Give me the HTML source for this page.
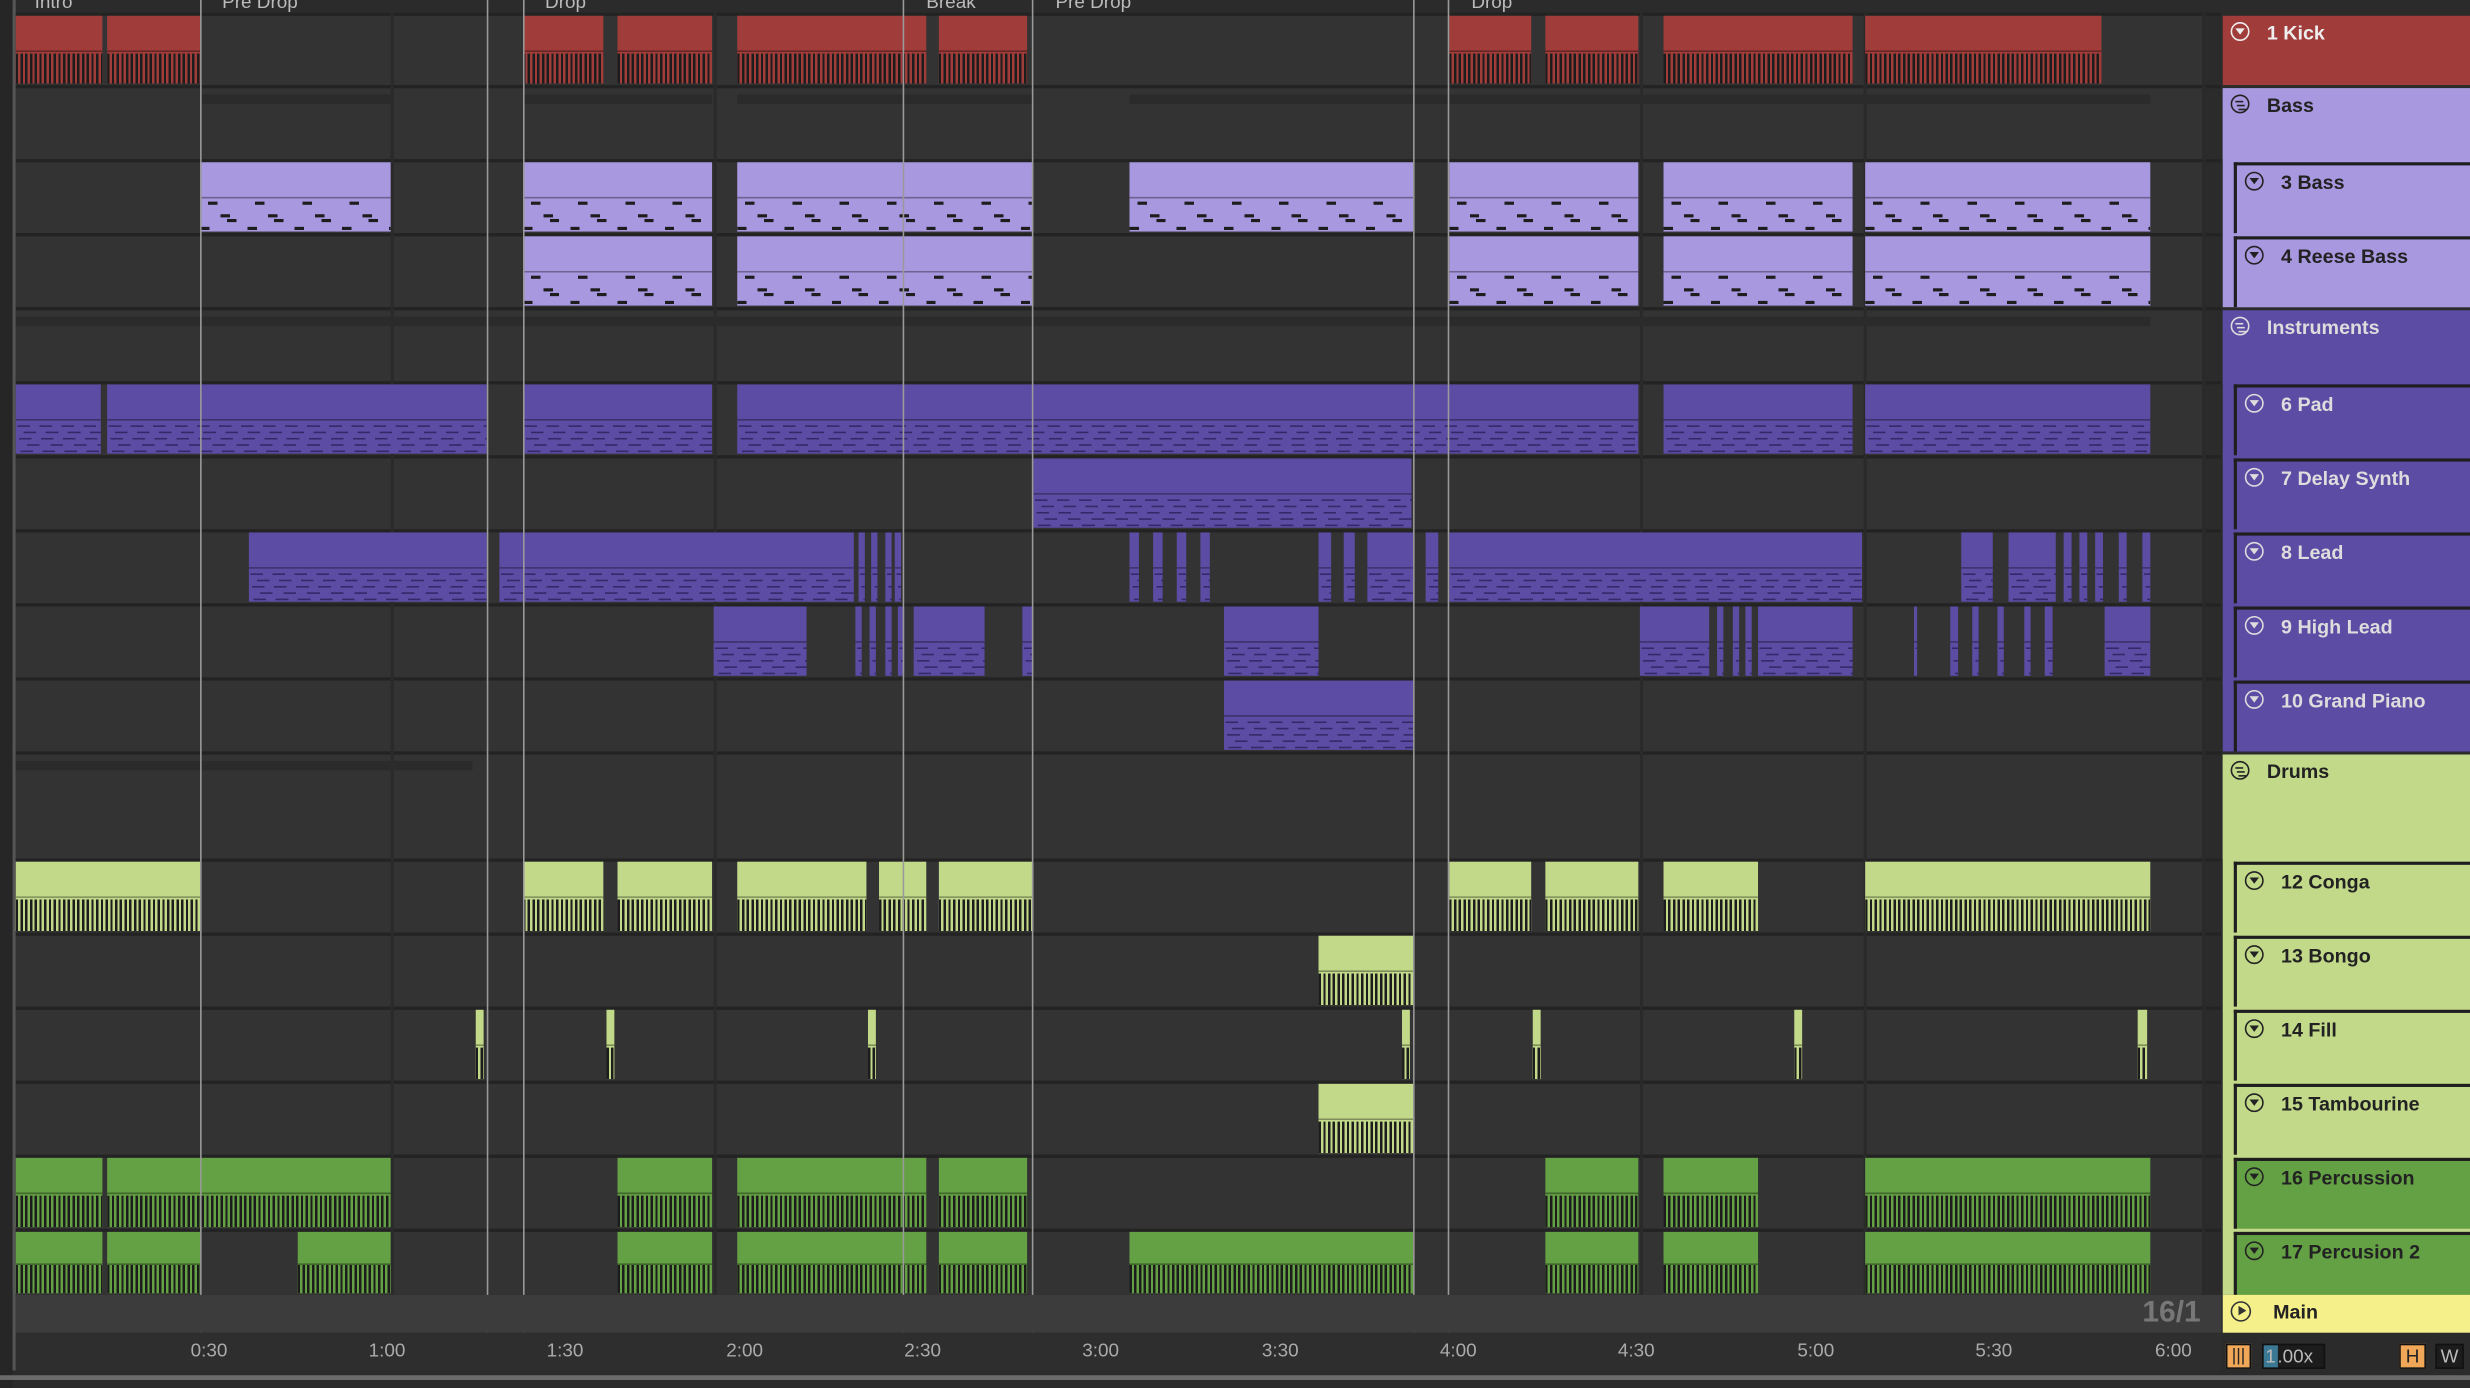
<!DOCTYPE html>
<html><head><meta charset="utf-8">
<style>
html,body{margin:0;padding:0;background:#2a2a2a;overflow:hidden;width:2470px;height:1388px}
#w{position:absolute;left:0;top:0;width:1568px;height:881px;transform:scale(1.5753);transform-origin:0 0;background:#2b2b2b;font-family:"Liberation Sans",sans-serif;overflow:hidden}
.row{position:absolute;left:10px;width:1388px;background:#333}
.sep{position:absolute;left:10px;width:1400px;height:2px;background:#232323}
.c{position:absolute;box-sizing:border-box;overflow:hidden}
.c .t{position:absolute;left:0;right:0;top:0;height:50%;border-bottom:1px solid rgba(0,0,0,.35)}
.c .b{position:absolute;left:0;right:0;bottom:0;height:45%}
.loc{position:absolute;top:0;width:1px;height:848px;background:#9a9a9a}
.hd{position:absolute;left:1411px;width:157px;box-sizing:border-box;font-weight:bold;font-size:12.5px;padding:4px 0 0 28px}
.hd.sub{left:1418px}
.ic{position:absolute;left:5px;top:4px;width:12px;height:12px;border:1.3px solid currentColor;border-radius:50%;box-sizing:border-box}
.ic:after{content:"";position:absolute;left:2px;top:3px;border-left:3px solid transparent;border-right:3px solid transparent;border-top:4px solid currentColor}
.ic.g:after{border:0;left:2px;top:2.5px;width:6px;height:1.2px;background:currentColor;box-shadow:1px 2.5px 0 currentColor,2px 5px 0 currentColor;width:5px}
.lbl{position:absolute;top:-6px;color:#bbb;font-size:12px}
.tm{position:absolute;top:850px;color:#aaa;font-size:12px}
</style></head><body><div id="w">
<div style="position:absolute;left:0;top:0;width:8px;height:881px;background:#262626"></div>
<div style="position:absolute;left:8px;top:0;width:2px;height:870px;background:#555"></div>
<div id="a"></div>
<div class="lbl" style="left:22px">Intro</div>
<div class="lbl" style="left:141px">Pre Drop</div>
<div class="lbl" style="left:346px">Drop</div>
<div class="lbl" style="left:588px">Break</div>
<div class="lbl" style="left:670px">Pre Drop</div>
<div class="lbl" style="left:934px">Drop</div>
<div style="position:absolute;left:10px;top:822px;width:1400px;height:24px;background:#3c3c3c"></div>
<div style="position:absolute;left:1360px;top:823px;color:#777;font-size:19px;font-weight:bold">16/1</div>
<div style="position:absolute;left:10px;top:846px;width:1400px;height:24px;background:#2e2e2e"></div>
<div class="tm" style="left:121px">0:30</div><div class="tm" style="left:234px">1:00</div><div class="tm" style="left:347px">1:30</div><div class="tm" style="left:461px">2:00</div><div class="tm" style="left:574px">2:30</div><div class="tm" style="left:687px">3:00</div><div class="tm" style="left:801px">3:30</div><div class="tm" style="left:914px">4:00</div><div class="tm" style="left:1027px">4:30</div><div class="tm" style="left:1141px">5:00</div><div class="tm" style="left:1254px">5:30</div><div class="tm" style="left:1368px">6:00</div>
<div style="position:absolute;left:0;top:873px;width:1568px;height:3px;background:#6a6a6a"></div>
<div id="h"></div>
<div style="position:absolute;left:1411px;top:822px;width:157px;height:24px;background:#f6f08a;color:#222;font-weight:bold;font-size:12.5px;box-sizing:border-box;padding:4px 0 0 32px">Main<span style="position:absolute;left:5px;top:4px;width:13px;height:13px;border:1.3px solid #333;border-radius:50%;box-sizing:border-box"><span style="position:absolute;left:4px;top:2px;border-top:3.5px solid transparent;border-bottom:3.5px solid transparent;border-left:5px solid #333"></span></span></div>
<div style="position:absolute;left:1413px;top:853px;width:16px;height:16px;background:#f0a858;border:1px solid #111;box-sizing:border-box;color:#222;font-size:11px;text-align:center;line-height:14px">|||</div>
<div style="position:absolute;left:1436px;top:853px;width:40px;height:16px;background:#1c1c1c;border:1px solid #111;box-sizing:border-box;color:#bbb;font-size:12px;line-height:14px"><span style="background:#3a7894;padding:0 1px">1</span>.00x</div>
<div style="position:absolute;left:1523px;top:853px;width:17px;height:16px;background:#f0a858;border:1px solid #111;box-sizing:border-box;color:#222;font-size:12px;text-align:center;line-height:14px">H</div>
<div style="position:absolute;left:1546px;top:853px;width:18px;height:16px;background:#1c1c1c;border:1px solid #111;box-sizing:border-box;color:#bbb;font-size:12px;text-align:center;line-height:14px">W</div>
</div>
<script>
var rows=[[8,54],[54,101],[101,148],[148,195],[195,242],[242,289],[289,336],[336,383],[383,430],[430,477],[477,545],[545,592],[592,639],[639,686],[686,733],[733,780],[780,822]];
var A=document.getElementById('a'),s='';
rows.forEach(function(r){s+='<div class="row" style="top:'+(r[0]+2)+'px;height:'+(r[1]-r[0]-2)+'px"></div><div class="sep" style="top:'+r[0]+'px"></div>';});
[248,453,1041,1183,1398].forEach(function(x){s+='<div style="position:absolute;left:'+x+'px;top:8px;width:2px;height:814px;background:#2a2a2a"></div>';});
var R='#a03c3a',L='#a898e0',P='#5c4ca4',G='#c2d98a',D='#64a044';
var bars='repeating-linear-gradient(90deg,#1c1c1c 0 1.5px,transparent 1.5px 3px)';
function dl(a,b,y){return 'repeating-linear-gradient(90deg,transparent 0 '+a+'px,#1d1d1d '+a+'px '+b+'px,transparent '+b+'px 30px) 0 '+y+'px/100% 2px no-repeat';}
var bassPat=[dl(5,11,1),dl(13,19,9),dl(17,23,12),dl(0,6,17)].join(',');
function pl(y,o){return 'repeating-linear-gradient(90deg,transparent 0 '+o+'px,rgba(35,25,80,.7) '+o+'px '+(o+8)+'px,transparent '+(o+8)+'px 14px) 0 '+y+'px/100% 1px no-repeat';}
var padPat=[pl(2,1),pl(6,5),pl(10,2),pl(14,7),pl(18,3)].join(',');
var pat={R:bars,L:bassPat,P:padPat,G:bars,D:bars};
var clips=[
[0,R,'R',[[10,65],[68,127],[332,383],[392,452],[468,588],[596,652],[920,972],[981,1040],[1056,1176],[1184,1334]]],
[2,L,'L',[[127,248],[332,452],[468,656],[717,897],[920,1040],[1056,1176],[1184,1365]]],
[3,L,'L',[[332,452],[468,656],[920,1040],[1056,1176],[1184,1365]]],
[5,P,'P',[[10,64],[68,309],[332,452],[468,1040],[1056,1176],[1184,1365]]],
[6,P,'P',[[656,896]]],
[7,P,'P',[[158,309],[317,542],[545,549],[553,557],[562,566],[568,572],[717,723],[732,738],[747,753],[762,768],[837,845],[853,860],[868,897],[905,913],[920,1182],[1245,1265],[1275,1305],[1310,1315],[1320,1325],[1330,1335],[1345,1350],[1360,1365]]],
[8,P,'P',[[453,512],[543,547],[552,556],[562,566],[570,574],[580,625],[649,656],[777,837],[1041,1085],[1090,1094],[1100,1104],[1108,1112],[1116,1176],[1215,1217],[1238,1243],[1252,1256],[1268,1272],[1285,1289],[1298,1303],[1336,1365]]],
[9,P,'P',[[777,897]]],
[11,G,'G',[[10,127],[332,383],[392,452],[468,550],[558,588],[596,656],[920,972],[981,1040],[1056,1116],[1184,1365]]],
[12,G,'G',[[837,897]]],
[13,G,'G',[[302,307],[385,390],[551,556],[890,895],[973,978],[1139,1144],[1357,1363]]],
[14,G,'G',[[837,897]]],
[15,D,'D',[[10,65],[68,248],[392,452],[468,588],[596,652],[981,1040],[1056,1116],[1184,1365]]],
[16,D,'D',[[10,65],[68,127],[189,248],[392,452],[468,588],[596,652],[717,897],[981,1040],[1056,1116],[1184,1365]]]];
clips.forEach(function(c){var r=rows[c[0]];var top=r[0]+2,h=r[1]-r[0]-3;
c[3].forEach(function(x){s+='<div class="c" style="left:'+x[0]+'px;top:'+top+'px;width:'+(x[1]-x[0])+'px;height:'+h+'px;background:'+c[1]+'"><div class="t"></div><div class="b" style="background:'+pat[c[2]]+'"></div></div>';});});
[[1,[[128,248],[332,452],[468,656],[717,1365]]],[4,[[10,1365]]],[10,[[10,300]]]].forEach(function(g){var r=rows[g[0]];g[1].forEach(function(x){s+='<div style="position:absolute;left:'+x[0]+'px;top:'+(r[0]+6)+'px;width:'+(x[1]-x[0])+'px;height:6px;background:#2b2b2b"></div>';});});
[127,309,332,573,655,897,919].forEach(function(x){s+='<div class="loc" style="left:'+x+'px"></div>';});
A.innerHTML=s;
var H=document.getElementById('h'),t='';
var hd=[[0,'1 Kick',R,'#eee',0,0],[1,'Bass',L,'#222',0,1],[2,'3 Bass',L,'#222',1,0],[3,'4 Reese Bass',L,'#222',1,0],[4,'Instruments',P,'#ddd',0,1],[5,'6 Pad',P,'#ddd',1,0],[6,'7 Delay Synth',P,'#ddd',1,0],[7,'8 Lead',P,'#ddd',1,0],[8,'9 High Lead',P,'#ddd',1,0],[9,'10 Grand Piano',P,'#ddd',1,0],[10,'Drums',G,'#222',0,1],[11,'12 Conga',G,'#222',1,0],[12,'13 Bongo',G,'#222',1,0],[13,'14 Fill',G,'#222',1,0],[14,'15 Tambourine',G,'#222',1,0],[15,'16 Percussion',D,'#222',1,0],[16,'17 Percusion 2',D,'#222',1,0]];
var grp={1:[1,3],4:[4,9],10:[10,16]};
for(var k in grp){var a=rows[grp[k][0]],b=rows[grp[k][1]];t+='<div style="position:absolute;left:1411px;top:'+(a[0]+2)+'px;width:157px;height:'+(b[1]-a[0]-2)+'px;background:'+hd[k][2]+'"></div>';}
hd.forEach(function(h){var r=rows[h[0]];t+='<div class="hd'+(h[4]?' sub':'')+'" style="top:'+(r[0]+2)+'px;height:'+(r[1]-r[0]-2)+'px;background:'+h[2]+';color:'+h[3]+(h[4]?';border-left:2px solid #1e1e1e;border-top:2px solid #1e1e1e':'')+'"><span class="ic'+(h[5]?' g':'')+'"></span>'+h[1]+'</div>';});
H.innerHTML=t;
</script>
</body></html>
